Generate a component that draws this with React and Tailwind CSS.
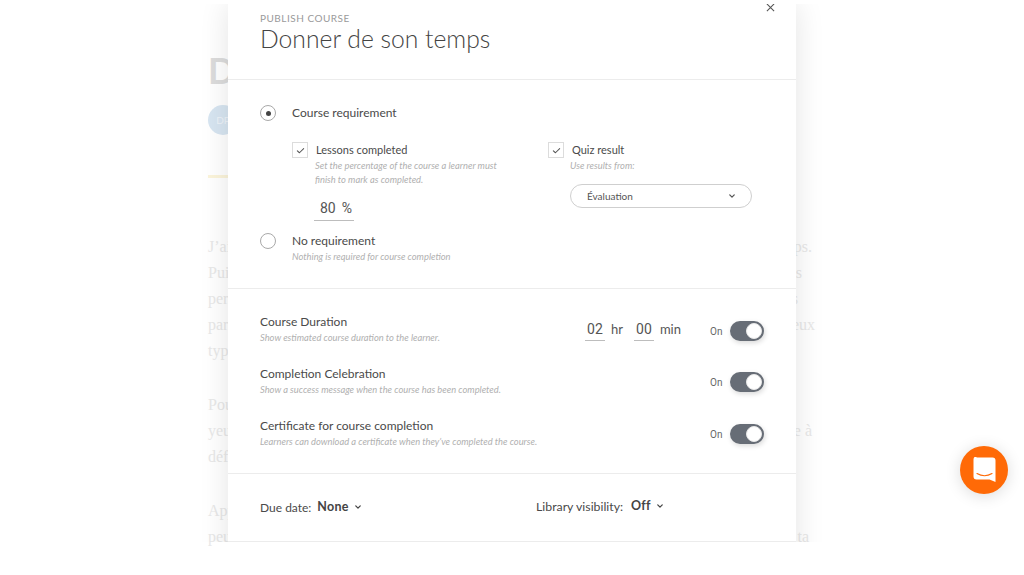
import React from "react";

const Chevron = ({ className = "" }) => (
  <svg viewBox="0 0 10 10" className={className} fill="none" stroke="currentColor" strokeWidth="1.6" strokeLinecap="round" strokeLinejoin="round">
    <path d="M2.2 3.6 5 6.4l2.8-2.8" />
  </svg>
);

const Check = () => (
  <span className="flex h-4 w-4 shrink-0 items-center justify-center border border-[#dcdcdc] bg-white text-[#555]">
    <svg viewBox="0 0 12 12" className="h-[9px] w-[9px]" fill="none" stroke="currentColor" strokeWidth="1.4" strokeLinecap="round" strokeLinejoin="round">
      <path d="M1.8 6.4 4.6 9l5.6-5.6" />
    </svg>
  </span>
);

const Radio = ({ on }) => (
  <span className="flex h-4 w-4 shrink-0 items-center justify-center rounded-full border border-[#a9a9a9] bg-white">
    {on && <span className="h-[5px] w-[5px] rounded-full bg-[#444]" />}
  </span>
);

const Help = ({ children, className = "" }) => (
  <p className={`text-[9.33px] italic leading-[14px] text-[#b0b0b0] ${className}`}>{children}</p>
);

const Toggle = () => (
  <div className="flex items-center gap-[7px]">
    <span className="w-[13px] font-['Roboto',sans-serif] text-[10px] text-[#666]">On</span>
    <span className="flex h-5 w-[34px] items-center justify-end rounded-full bg-[#676d76] pr-[2px] shadow-[1px_2px_5px_rgba(0,0,0,0.15)]">
      <span className="h-4 w-4 rounded-full border border-[#e8e8e8] bg-white" />
    </span>
  </div>
);

const Setting = ({ title, help, children }) => (
  <div className="flex h-[52px] items-start justify-between">
    <div>
      <p className="text-[12px] leading-4 text-[#4a4a4a]">{title}</p>
      <Help className="mt-[1px]">{help}</Help>
    </div>
    {children}
  </div>
);

const Line = ({ a, b, w }) => (
  <div className={`flex h-[26px] items-center justify-between whitespace-nowrap ${w}`}>
    <span>{a}</span>
    <span>{b}</span>
  </div>
);

export default function App() {
  return (
    <div className="relative h-[575px] w-[1024px] overflow-hidden bg-white font-['Lato',sans-serif]">
      <div className="ml-[208px] w-[620px] pt-[50px]">
        <h1 className="h-10 w-5 overflow-hidden whitespace-nowrap text-[36px] font-bold leading-10 text-[#dcdcdc]">D</h1>
        <div className="mt-[15px] flex h-[30px] w-[30px] items-center justify-center rounded-full bg-[#d7e5f1] text-[10px] text-[#eef4f9]">DP</div>
        <div className="mt-[40px] h-[3px] w-5 bg-[#fbf4da]" />
        <div className="mt-[56px] font-['Liberation_Serif',serif] text-[16px] text-[#e8e8e8]">
          <Line a="J’ai" b="temps." w="w-[604px]" />
          <Line a="Puis" b="s" w="w-[594px]" />
          <Line a="per" b="s" w="w-[590px]" />
          <Line a="par" b="eux" w="w-[607px]" />
          <Line a="typ" b="" w="w-[100px]" />
          <div className="h-[28px]" />
          <Line a="Pour" b="" w="w-[100px]" />
          <Line a="yeux" b="e à" w="w-[604px]" />
          <Line a="déf" b="" w="w-[100px]" />
          <div className="h-[28px]" />
          <Line a="App" b="" w="w-[100px]" />
          <Line a="peu" b="ta" w="w-[601px]" />
        </div>
      </div>

      <div className="absolute left-[178px] top-1 h-[538px] w-[668px] overflow-hidden px-[50px]">
        <div className="relative h-[600px] w-[568px] bg-white shadow-[0_0_28px_rgba(0,0,0,0.11)]">
          <svg viewBox="0 0 10 10" className="absolute left-[538px] -top-[1px] h-[9px] w-[9px] text-[#555]" fill="none" stroke="currentColor" strokeWidth="1.2">
            <path d="M1 1l8 8M9 1 1 9" />
          </svg>

          <header className="h-[76px] border-b border-[#ececec] px-8 pt-[8px]">
            <p className="text-[10px] leading-3 tracking-[0.05em] text-[#9a9a9a]">PUBLISH COURSE</p>
            <h2 className="mt-[1px] text-[24.7px] font-light leading-7 text-[#444]">Donner de son temps</h2>
          </header>

          <section className="h-[209px] border-b border-[#ececec] px-8 pt-[25px]">
            <div className="flex h-4 items-center">
              <Radio on />
              <span className="ml-4 text-[12px] text-[#4a4a4a]">Course requirement</span>
            </div>
            <div className="ml-8 mt-[21px] flex h-[78px]">
              <div className="w-[256px]">
                <div className="flex h-4 items-center gap-2">
                  <Check />
                  <span className="text-[11px] text-[#4a4a4a]">Lessons completed</span>
                </div>
                <Help className="ml-[23px] mt-[1px]">Set the percentage of the course a learner must<br />finish to mark as completed.</Help>
                <div className="ml-[22px] mt-[11px] flex h-[23px] w-10 items-start justify-center gap-[6px] border-b border-[#bdbdbd] pl-[4px] font-['Roboto',sans-serif] text-[14px] leading-5 text-[#555]">
                  <span>80</span><span>%</span>
                </div>
              </div>
              <div>
                <div className="flex h-4 items-center gap-2">
                  <Check />
                  <span className="text-[11px] text-[#4a4a4a]">Quiz result</span>
                </div>
                <Help className="ml-[22px] mt-[1px]">Use results from:</Help>
                <div className="ml-[22px] mt-[11px] flex h-6 w-[182px] items-center justify-between rounded-full border border-[#cfcfcf] pl-4 pr-[15px] text-[10px] text-[#555]">
                  <span>Évaluation</span>
                  <Chevron className="h-2 w-2" />
                </div>
              </div>
            </div>
            <div className="mt-[13px] flex h-4 items-center">
              <Radio />
              <span className="ml-4 text-[12px] text-[#4a4a4a]">No requirement</span>
            </div>
            <Help className="ml-8 mt-[1px]">Nothing is required for course completion</Help>
          </section>

          <section className="h-[185px] border-b border-[#ececec] px-8 pt-[25px]">
            <Setting title="Course Duration" help="Show estimated course duration to the learner.">
              <div className="mt-[4px] flex items-start">
                <div className="flex h-[23px] w-5 justify-center border-b border-[#bdbdbd] font-['Roboto',sans-serif] text-[14px] leading-[22px] text-[#555]">02</div>
                <span className="ml-[6px] mt-[3px] text-[13px] leading-4 text-[#555]">hr</span>
                <div className="ml-[11px] flex h-[23px] w-5 justify-center border-b border-[#bdbdbd] font-['Roboto',sans-serif] text-[14px] leading-[22px] text-[#555]">00</div>
                <span className="ml-[6px] mt-[3px] text-[13px] leading-4 text-[#555]">min</span>
                <div className="ml-[29px] mt-[3px]"><Toggle /></div>
              </div>
            </Setting>
            <Setting title="Completion Celebration" help="Show a success message when the course has been completed.">
              <div className="mt-[6px]"><Toggle /></div>
            </Setting>
            <Setting title="Certificate for course completion" help="Learners can download a certificate when they’ve completed the course.">
              <div className="mt-[6px]"><Toggle /></div>
            </Setting>
          </section>

          <section className="flex h-[68px] items-center border-b border-[#ececec] px-8">
            <div className="flex w-[276px] items-center">
              <span className="text-[12px] text-[#4a4a4a]">Due date:</span>
              <span className="ml-[6px] text-[12.5px] font-bold tracking-[0.02em] text-[#444]">None</span>
              <Chevron className="-mt-[2px] ml-[5px] h-2 w-2 text-[#444]" />
            </div>
            <div className="flex items-center">
              <span className="text-[12.3px] text-[#4a4a4a]">Library visibility:</span>
              <span className="ml-2 -mt-[3px] text-[12.5px] font-bold tracking-[0.02em] text-[#444]">Off</span>
              <Chevron className="ml-[5px] -mt-[4px] h-2 w-2 text-[#444]" />
            </div>
          </section>
        </div>
      </div>

      <div className="absolute left-[960px] top-[446px] flex h-12 w-12 items-center justify-center rounded-full bg-[#ff6a07] shadow-[0_2px_16px_rgba(0,0,0,0.14)]">
        <svg viewBox="0 0 23 26" className="h-[26px] w-[23px]">
          <path d="M3.5 0.5h16a3 3 0 0 1 3 3v21.5l-6-2.6h-13a3 3 0 0 1-3-3v-16.9a3 3 0 0 1 3-3z" fill="#fff" />
          <path d="M4 16.6c4.5 2.6 10.5 2.6 15 0" fill="none" stroke="#ff6a07" strokeWidth="1.2" strokeLinecap="round" />
        </svg>
      </div>
    </div>
  );
}
